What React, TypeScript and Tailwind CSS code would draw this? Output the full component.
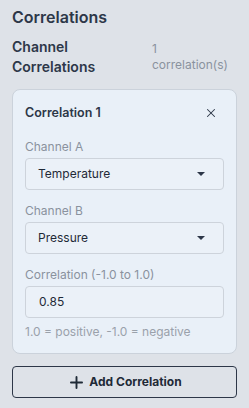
import { X, Plus } from 'lucide-react';

// ─── Select-like field ──────────────────────────────────────────────────────

function SelectField({ label, value }: { label: string; value: string }) {
    return (
        <div className="flex flex-col">
            <label className="text-[12px] leading-[16px] text-[#8a929e] mb-[3px]">{label}</label>
            <div className="h-[32px] flex items-center justify-between pl-[12px] pr-[18px] rounded-[4px] border border-[#cdd3db] bg-[#ebf1f8]">
                <span className="text-[12px] text-[#1f2937]">{value}</span>
                <span className="w-0 h-0 border-l-[4px] border-r-[4px] border-t-[4px] border-l-transparent border-r-transparent border-t-[#2d3748]" />
            </div>
        </div>
    );
}

export default function App() {
    return (
        <div
            className="w-[249px] h-[408px] bg-[#dee2e8] px-[12px] pt-[6px] overflow-hidden"
            style={{ fontFamily: 'Inter, "Noto Sans", sans-serif' }}
        >
            {/* Header */}
            <h2 className="text-[16px] leading-[22px] font-semibold text-[#2d3748]">Correlations</h2>

            <div className="flex items-start mt-[9px]">
                <h3 className="w-[140px] text-[14px] leading-[20px] font-semibold text-[#2d3748]">
                    Channel
                    <br />
                    Correlations
                </h3>
                <p className="text-[12px] leading-[16px] text-[#8a929e] mt-[4px]">
                    1
                    <br />
                    correlation(s)
                </p>
            </div>

            {/* Card */}
            <div className="mt-[12px] rounded-[8px] border border-[#cbd2db] bg-[#e9f0f8] px-[12px] pt-[14px] pb-[13px]">
                <div className="flex items-center justify-between">
                    <span className="text-[12.5px] leading-[18px] font-semibold text-[#2d3748]">Correlation 1</span>
                    <X size={14} strokeWidth={1.8} className="text-[#2d3748] mr-[6px]" />
                </div>

                <div className="mt-[17px] flex flex-col gap-[13px]">
                    <SelectField label="Channel A" value="Temperature" />
                    <SelectField label="Channel B" value="Pressure" />
                    <div className="flex flex-col">
                        <label className="text-[12px] leading-[16px] text-[#8a929e] mb-[3px]">Correlation (-1.0 to 1.0)</label>
                        <div className="h-[32px] flex items-center pl-[13px] rounded-[4px] border border-[#cdd3db] bg-[#ebf1f8]">
                            <span className="text-[12px] text-[#1f2937]">0.85</span>
                        </div>
                        <p className="mt-[6px] text-[12px] leading-[16px] text-[#9aa1ab]">1.0 = positive, -1.0 = negative</p>
                    </div>
                </div>
            </div>

            {/* Add button */}
            <button className="mt-[12px] w-full h-[32px] flex items-center justify-center gap-[3px] rounded-[4px] border border-[#2d3748] text-[12px] font-bold text-[#1f2a37]">
                <Plus size={19} strokeWidth={2.4} />
                Add Correlation
            </button>
        </div>
    );
}
